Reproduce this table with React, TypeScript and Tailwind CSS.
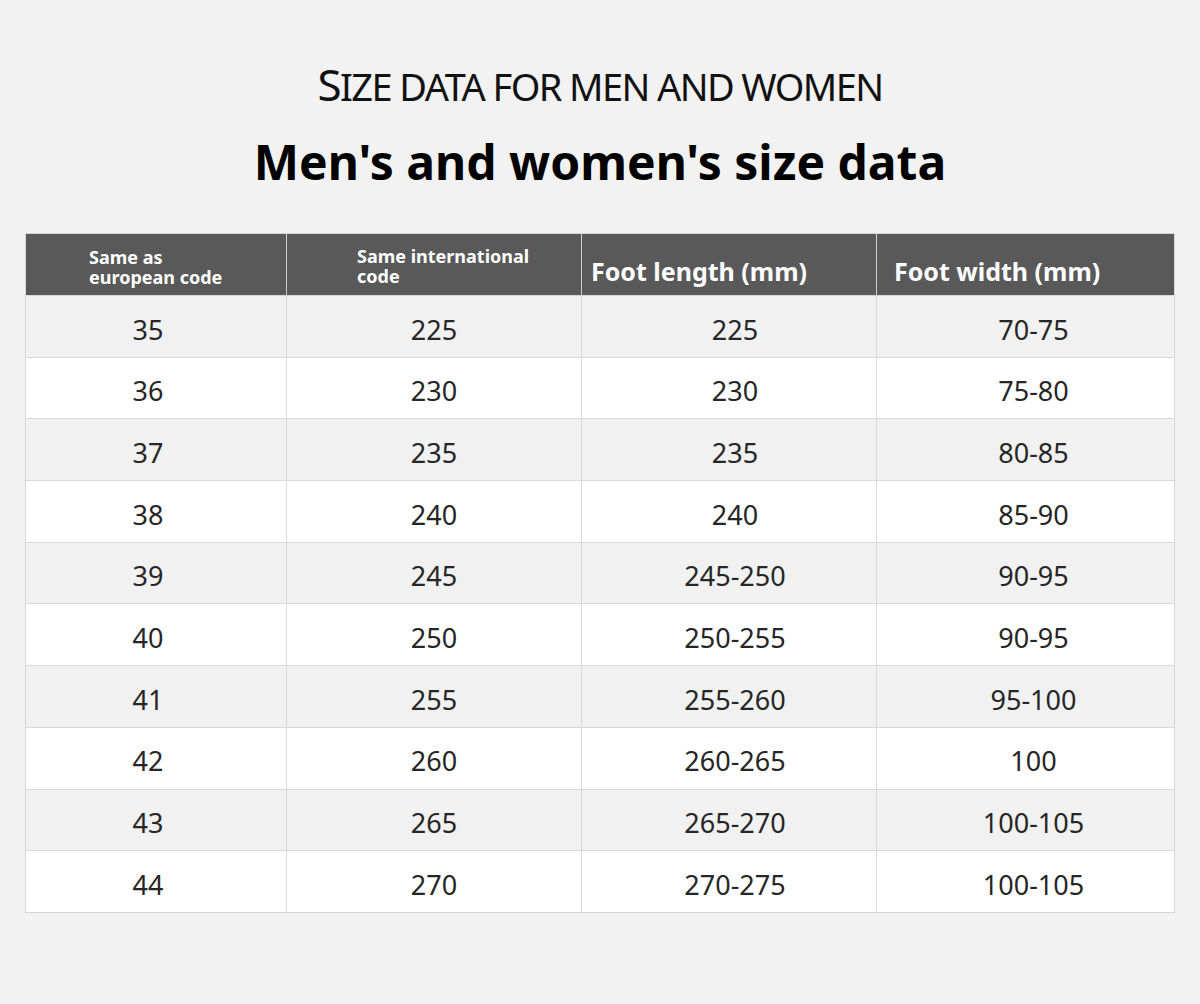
import React from 'react'

const rows = [
  ['35', '225', '225', '70-75'],
  ['36', '230', '230', '75-80'],
  ['37', '235', '235', '80-85'],
  ['38', '240', '240', '85-90'],
  ['39', '245', '245-250', '90-95'],
  ['40', '250', '250-255', '90-95'],
  ['41', '255', '255-260', '95-100'],
  ['42', '260', '260-265', '100'],
  ['43', '265', '265-270', '100-105'],
  ['44', '270', '270-275', '100-105']
]

const cols = 'grid grid-cols-[261px_295px_295px_297px]'

export default function App() {
  return (
    <div
      className="w-[1200px] h-[1004px] bg-[#f2f2f2] flex flex-col items-center"
      style={{ fontFamily: "'Noto Sans', 'Open Sans', sans-serif" }}
    >
      <div className="pt-[58px] text-[38px] leading-[52px] text-[#111] tracking-[-1.6px]">
        <span className="text-[44px]">S</span>IZE DATA FOR MEN AND WOMEN
      </div>
      <h1 className="mt-[19px] text-[48px] leading-[62px] font-bold text-black">
        Men's and women's size data
      </h1>

      <div className="mt-[40px] w-[1150px] border border-[#d6d6d6]">
        <div className={`${cols} h-[61px] bg-[#595959] text-white font-bold`}>
          <div className="border-r border-[#cfcfcf] flex flex-col justify-center pl-[63px] pt-[5px] text-[18px] leading-[20px]">
            <span>Same as</span>
            <span>european code</span>
          </div>
          <div className="border-r border-[#cfcfcf] flex flex-col justify-center pl-[70px] pt-[3px] text-[18px] leading-[20px]">
            <span>Same international</span>
            <span>code</span>
          </div>
          <div className="border-r border-[#cfcfcf] flex items-center pl-[9px] pt-[14px] text-[25px]">
            Foot length (mm)
          </div>
          <div className="flex items-center pl-[17px] pt-[14px] text-[25px]">Foot width (mm)</div>
        </div>
        {rows.map((r, i) => (
          <div
            key={i}
            className={`${cols} h-[61.7px] border-t border-[#d9d9d9] text-[27px] text-[#262626] ${
              i % 2 === 0 ? 'bg-[#f1f1f1]' : 'bg-white'
            }`}
          >
            {r.map((c, j) => (
              <div
                key={j}
                className={`flex items-center justify-center pt-[7px] ${j < 3 ? 'border-r border-[#d9d9d9]' : ''} ${
                  j === 0 ? 'pr-[16px]' : j === 3 ? 'pl-[16px]' : j === 2 ? 'pl-[12px]' : ''
                }`}
              >
                {c}
              </div>
            ))}
          </div>
        ))}
      </div>
    </div>
  )
}
